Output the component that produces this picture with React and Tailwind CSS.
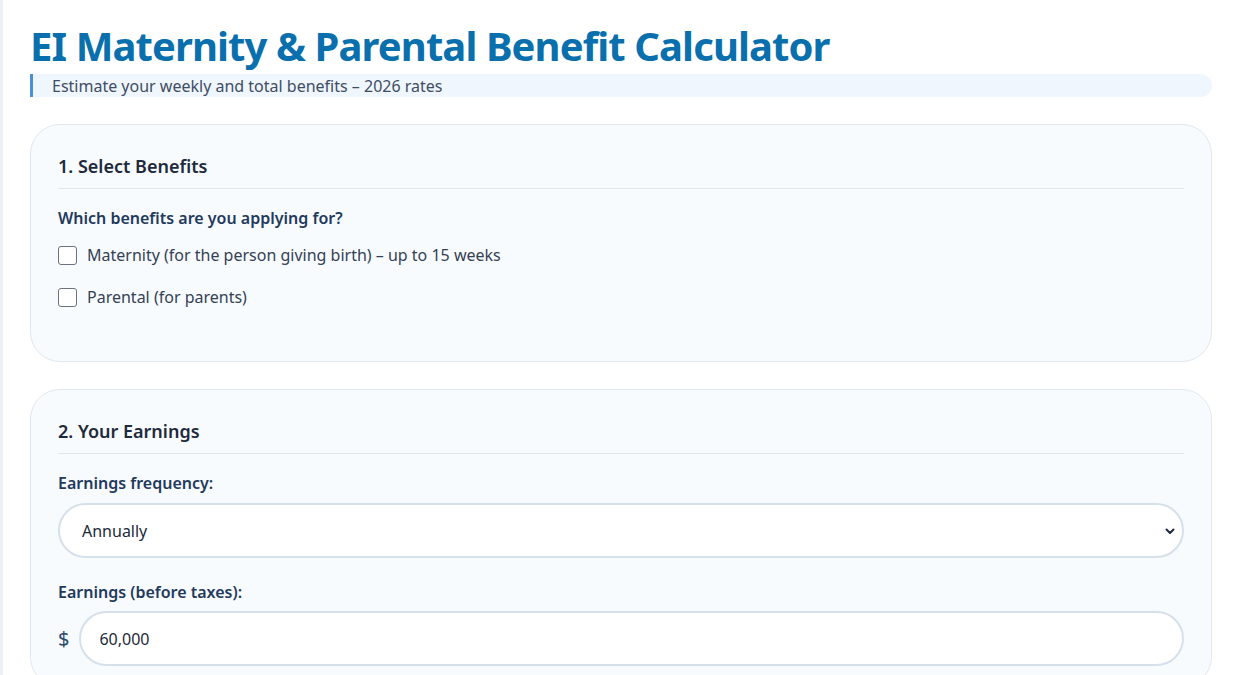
import React from "react";

function Checkbox({ label }) {
  return (
    <label className="flex items-center gap-[10px] text-[16px] text-[#334155]">
      <span className="w-[19px] h-[19px] rounded-[3px] border border-[#6b7280] bg-white shrink-0"></span>
      <span>{label}</span>
    </label>
  );
}

export default function App() {
  return (
    <div className="min-h-screen bg-white flex" style={{ fontFamily: '"Noto Sans", "Open Sans", sans-serif' }}>
      <div className="w-[3px] bg-[#eceff4] shrink-0"></div>
      <div className="flex-1 pl-[27px] pr-[25px] pt-[20px]">
        <h1 className="text-[40px] font-bold text-[#0a6fad] leading-[52px] tracking-[-0.9px]">
          EI Maternity &amp; Parental Benefit Calculator
        </h1>
        <div className="mt-[2px] h-[23px] flex items-center border-l-[3px] border-[#4a90d9] bg-[#eff6fd] rounded-r-full pl-[19px] text-[16px] text-[#3f4d63]">
          Estimate your weekly and total benefits – 2026 rates
        </div>

        <section className="mt-[27px] border border-[#dfe8ef] bg-[#f8fbfe] rounded-[30px] px-[27px] pt-[28px] h-[238px]">
          <h2 className="text-[18px] leading-[27px] font-semibold text-[#1e2a3b] pb-[8px] border-b border-[#dfe7ee]">
            1. Select Benefits
          </h2>
          <p className="mt-[17px] text-[16px] leading-[24px] font-semibold text-[#1f3a5c]">Which benefits are you applying for?</p>
          <div className="mt-[13px] flex flex-col gap-[18px]">
            <Checkbox label="Maternity (for the person giving birth) – up to 15 weeks" />
            <Checkbox label="Parental (for parents)" />
          </div>
        </section>

        <section className="mt-[27px] border border-[#dfe8ef] bg-[#f8fbfe] rounded-[30px] px-[27px] pt-[28px] pb-[20px]">
          <h2 className="text-[18px] leading-[27px] font-semibold text-[#1e2a3b] pb-[8px] border-b border-[#dfe7ee]">
            2. Your Earnings
          </h2>
          <p className="mt-[17px] text-[16px] leading-[24px] font-semibold text-[#1f3a5c]">Earnings frequency:</p>
          <div className="mt-[8px] h-[55px] rounded-full border-2 border-[#d6e0ea] bg-white flex items-center justify-between pl-[22px] pr-[6px] text-[16px] text-[#1e293b]">
            <span>Annually</span>
            <svg width="12" height="12" viewBox="0 0 12 12" fill="none">
              <path d="M2.5 4.5 L6 8 L9.5 4.5" stroke="#1e293b" strokeWidth="2" strokeLinecap="round" strokeLinejoin="round" />
            </svg>
          </div>
          <p className="mt-[22px] text-[16px] leading-[24px] font-semibold text-[#1f3a5c]">Earnings (before taxes):</p>
          <div className="mt-[7px] flex items-center gap-[10px]">
            <span className="text-[20px] text-[#2a4a6b]">$</span>
            <div className="flex-1 h-[55px] rounded-full border-2 border-[#d6e0ea] bg-white flex items-center pl-[18px] text-[16px] text-[#1e293b]">
              60,000
            </div>
          </div>
        </section>
      </div>
    </div>
  );
}
